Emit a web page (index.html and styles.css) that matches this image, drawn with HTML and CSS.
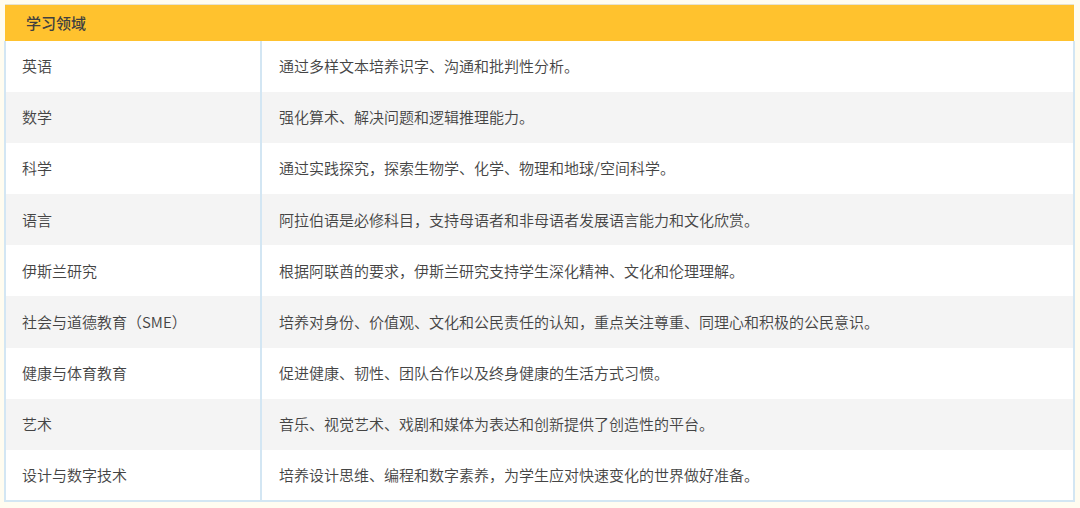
FILE: index.html
```html
<!DOCTYPE html>
<html lang="zh">
<head>
<meta charset="utf-8">
<link rel="stylesheet" href="styles.css">
</head>
<body>
<div class="wrap">
<table class="areas">
  <colgroup>
    <col class="c1">
    <col class="c2">
  </colgroup>
  <thead>
    <tr><th colspan="2">学习领域</th></tr>
  </thead>
  <tbody>
    <tr><td class="k">英语</td><td class="v">通过多样文本培养识字、沟通和批判性分析。</td></tr>
    <tr><td class="k">数学</td><td class="v">强化算术、解决问题和逻辑推理能力。</td></tr>
    <tr><td class="k">科学</td><td class="v">通过实践探究，探索生物学、化学、物理和地球/空间科学。</td></tr>
    <tr><td class="k">语言</td><td class="v">阿拉伯语是必修科目，支持母语者和非母语者发展语言能力和文化欣赏。</td></tr>
    <tr><td class="k">伊斯兰研究</td><td class="v">根据阿联酋的要求，伊斯兰研究支持学生深化精神、文化和伦理理解。</td></tr>
    <tr><td class="k">社会与道德教育（SME）</td><td class="v">培养对身份、价值观、文化和公民责任的认知，重点关注尊重、同理心和积极的公民意识。</td></tr>
    <tr><td class="k">健康与体育教育</td><td class="v">促进健康、韧性、团队合作以及终身健康的生活方式习惯。</td></tr>
    <tr><td class="k">艺术</td><td class="v">音乐、视觉艺术、戏剧和媒体为表达和创新提供了创造性的平台。</td></tr>
    <tr><td class="k">设计与数字技术</td><td class="v">培养设计思维、编程和数字素养，为学生应对快速变化的世界做好准备。</td></tr>
  </tbody>
</table>
</div>
</body>
</html>
```
FILE: styles.css
```css
html, body {
  margin: 0;
  padding: 0;
  background: #fffcf0;
}
body {
  font-family: "Noto Sans CJK SC", "Noto Sans", sans-serif;
  color: #444444;
}
.wrap {
  padding: 4px 5px 0 4px;
}
.areas {
  width: 1071px;
  border-collapse: collapse;
  table-layout: fixed;
  font-size: 15px;
}
.areas col.c1 {
  width: 256px;
}
.areas th {
  background: #ffc22e;
  text-align: left;
  font-weight: 500;
  color: #404040;
  height: 36px;
  padding: 0 0 0 21px;
  border-top: 1px solid #e6e2cf;
  box-sizing: border-box;
}
.areas tbody tr {
  height: 51.2px;
  background: #ffffff;
}
.areas tbody tr:nth-child(even) {
  background: #f4f4f4;
}
.areas td {
  padding: 0;
  vertical-align: middle;
  border-left: 2px solid #d3e6f3;
  border-right: 2px solid #d3e6f3;
  line-height: 20px;
  white-space: nowrap;
  font-weight: 350;
}
.areas tbody tr:last-child td {
  border-bottom: 2px solid #d3e6f3;
}
.areas td.k {
  padding-left: 16px;
}
.areas td.v {
  padding-left: 17px;
}
```
